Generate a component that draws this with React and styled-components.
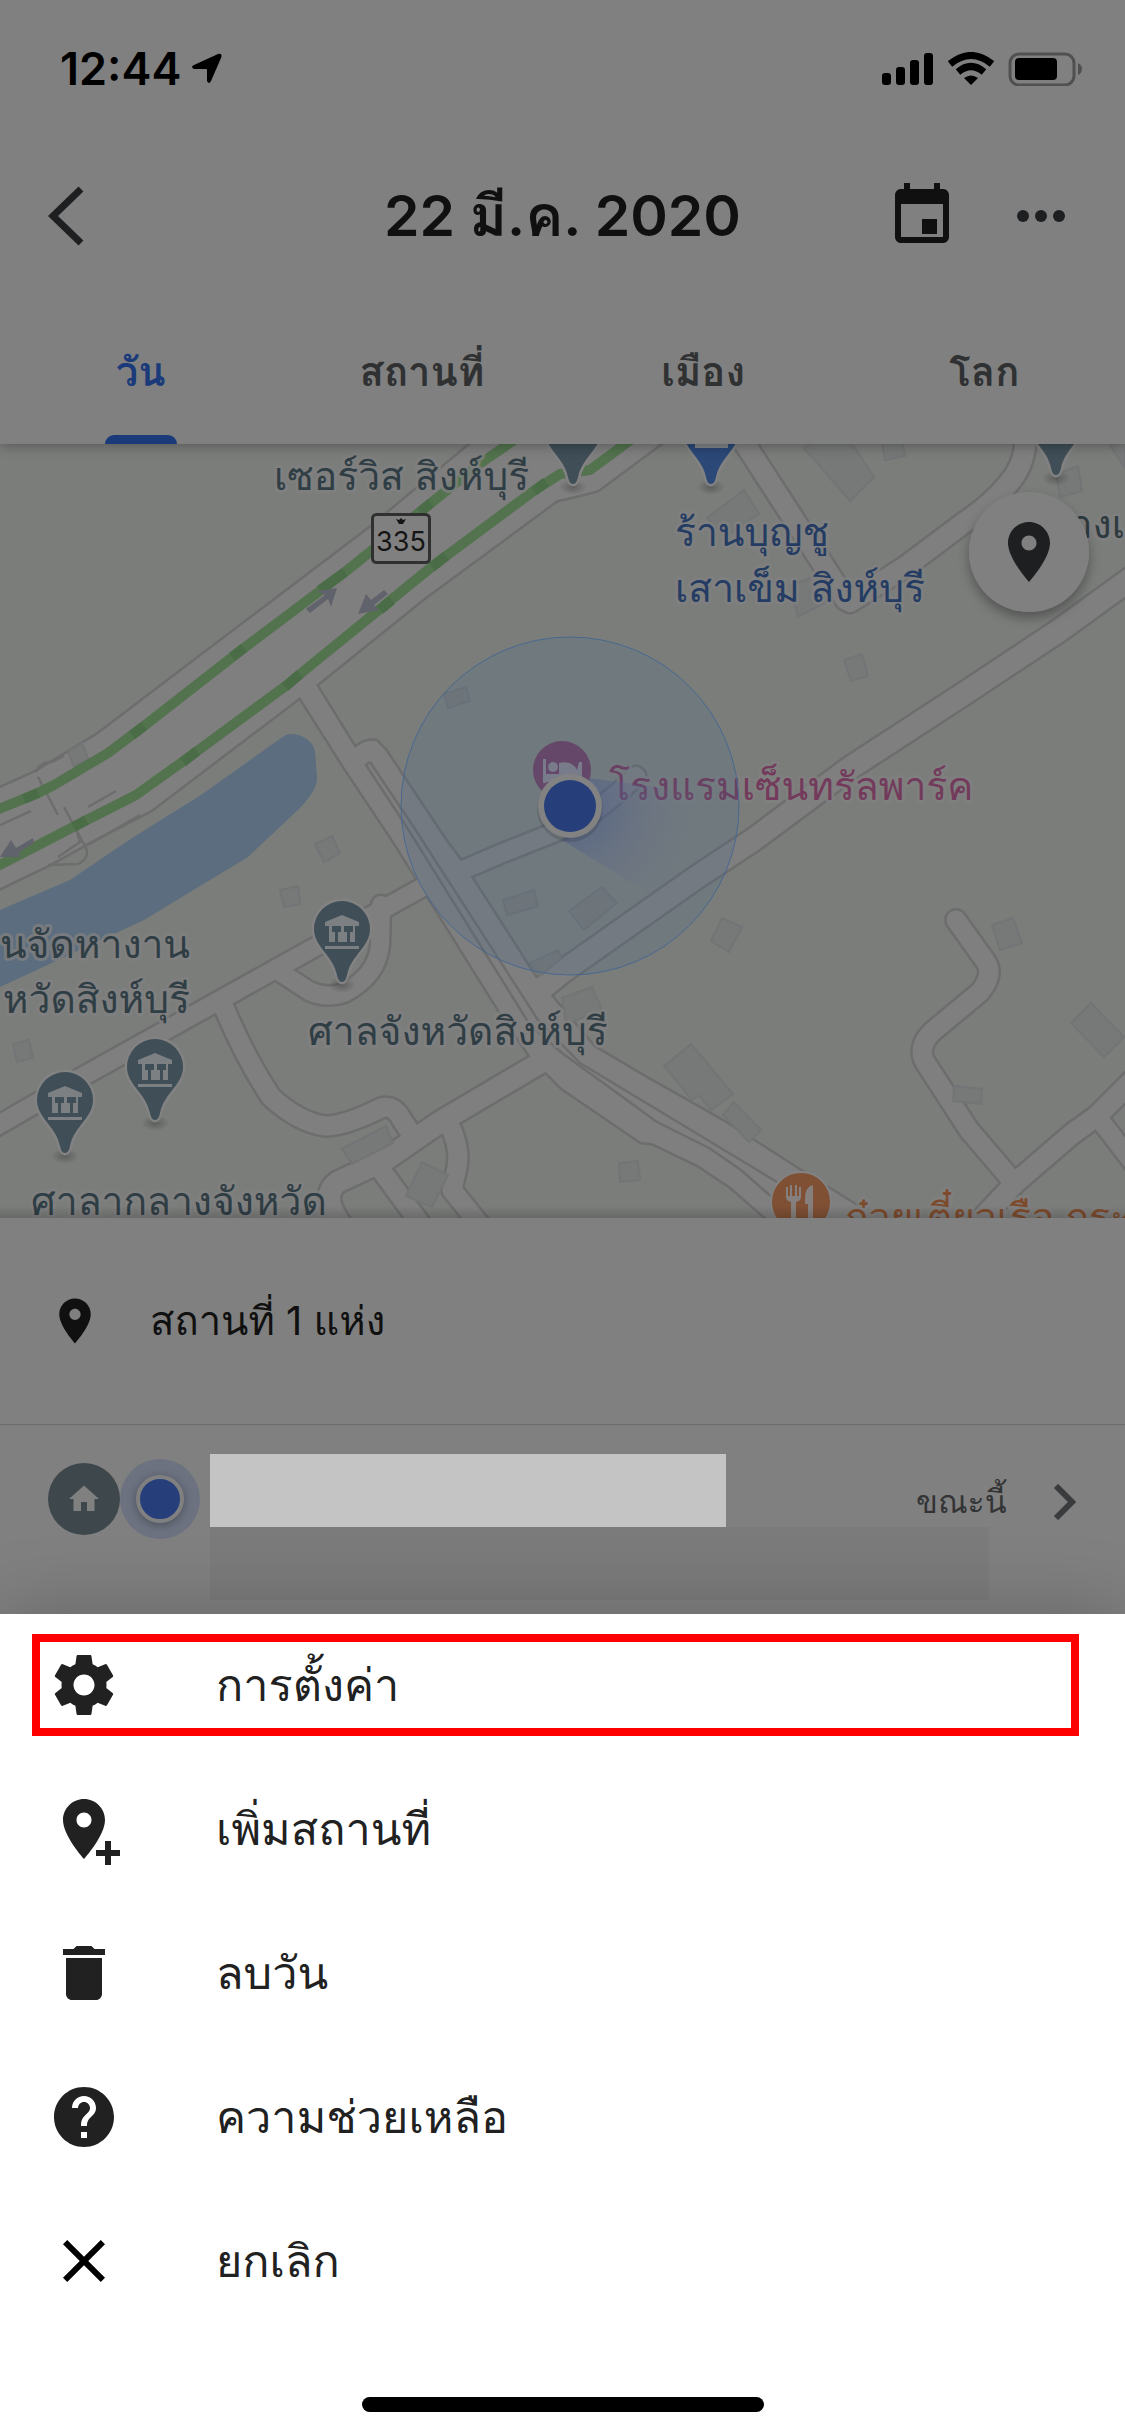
import React from "react";
import styled, { createGlobalStyle, css } from "styled-components";

const thai = `Inter, Loma, "Noto Sans Thai Looped", "Noto Sans Thai", "Noto Sans", sans-serif`;

const GlobalStyle = createGlobalStyle`
  *, *::before, *::after { box-sizing: border-box; }
  body { margin: 0; background: #ffffff; font-family: ${thai}; }
  svg { display: block; }
`;

const BareButton = styled.button`
  margin: 0;
  padding: 0;
  border: 0;
  background: none;
  color: inherit;
  font-family: inherit;
  cursor: pointer;
`;

const Screen = styled.div`
  display: flex;
  flex-direction: column;
  width: 100%;
  min-height: 100vh;
  background: #808080;
  overflow: hidden;
`;

const Header = styled.header`
  display: flex;
  flex-direction: column;
  position: relative;
  z-index: 1;
  background: #808080;
  box-shadow: 0 2px 12px rgba(0, 0, 0, 0.3);
`;

const StatusBar = styled.div`
  display: flex;
  align-items: center;
  justify-content: space-between;
  height: 138px;
  padding: 0 42px 0 60px;
  color: #000000;
`;

const StatusGroup = styled.div`
  display: flex;
  align-items: center;
  gap: ${(p) => p.$gap}px;
`;

const Clock = styled.time`
  font-size: 45px;
  line-height: 54px;
  font-weight: 600;
`;

const NavBar = styled.div`
  display: grid;
  grid-template-columns: 1fr auto 1fr;
  align-items: center;
  height: 156px;
  padding: 0 48px;
  color: #1e1f20;
`;

const Title = styled.h1`
  margin: 0;
  font-size: 57px;
  line-height: 84px;
  font-weight: 600;
  color: #101010;
`;

const NavActions = styled.div`
  display: flex;
  align-items: center;
  justify-content: flex-end;
  gap: 62px;
`;

const IconButton = styled(BareButton)`
  display: flex;
  align-items: center;
`;

const Tabs = styled.nav`
  display: grid;
  grid-template-columns: repeat(4, 1fr);
  height: 150px;
`;

const Tab = styled(BareButton)`
  display: flex;
  flex-direction: column;
  align-items: center;
  justify-content: space-between;
  padding-top: 48px;
  font-size: 40px;
  line-height: 60px;
  font-weight: 600;
  color: ${(p) => (p.$active ? "#1a3a7a" : "#2f3133")};

  &::after {
    content: "";
    width: 72px;
    height: 9px;
    border-radius: 9px 9px 0 0;
    background: ${(p) => (p.$active ? "#1b3a7a" : "transparent")};
  }
`;

const MapArea = styled.section`
  position: relative;
  height: 774px;
  background: #7b7d7b;
  overflow: hidden;

  & > svg {
    width: 100%;
    height: 100%;
  }

  &::after {
    content: "";
    position: absolute;
    inset: auto 0 0;
    height: 12px;
    background: linear-gradient(transparent, rgba(0, 0, 0, 0.16));
  }
`;

const LocateButton = styled(BareButton)`
  position: absolute;
  top: 48px;
  right: 36px;
  display: flex;
  align-items: center;
  justify-content: center;
  width: 120px;
  height: 120px;
  border-radius: 50%;
  background: rgba(128, 128, 128, 0.97);
  color: #1e1f20;
  box-shadow: 0 6px 12px rgba(0, 0, 0, 0.32);
`;

const Summary = styled.section`
  display: flex;
  align-items: center;
  gap: 48px;
  height: 207px;
  padding: 0 48px;
  border-bottom: 1px solid #6c6c6c;
  font-size: 40px;
  line-height: 60px;
  color: #101010;
`;

const VisitRow = styled.section`
  display: grid;
  grid-template-columns: 162px 1fr 73px 88px;
  grid-template-rows: 73px 73px;
  height: 189px;
  padding: 29px 48px 0;
`;

const VisitMarkers = styled.div`
  grid-area: 1 / 1 / 3 / 2;
  display: flex;
  align-items: center;
  height: 90px;
`;

const HomeBadge = styled.div`
  display: flex;
  align-items: center;
  justify-content: center;
  width: 72px;
  height: 72px;
  border-radius: 50%;
  background: #3d474c;
  color: #808080;
`;

const CurrentDot = styled.div`
  display: flex;
  align-items: center;
  justify-content: center;
  width: 80px;
  height: 80px;
  border-radius: 50%;
  background: #6c7280;

  &::after {
    content: "";
    width: 48px;
    height: 48px;
    border-radius: 50%;
    border: 4px solid #808080;
    background: #263f7a;
    box-shadow: 0 2px 10px rgba(0, 0, 0, 0.3);
  }
`;

const NameCover = styled.div`
  grid-area: 1 / 2 / 2 / 3;
  width: 100%;
  max-width: 516px;
  background: #c4c4c4;
`;

const AddressCover = styled.div`
  grid-area: 2 / 2 / 3 / 4;
  background: #7b7b7b;
`;

const VisitLink = styled(BareButton)`
  grid-area: 1 / 3 / 3 / 5;
  display: flex;
  align-items: center;
  justify-content: space-between;
  height: 96px;
  font-size: 32px;
  line-height: 48px;
  color: #333435;
`;

const Sheet = styled.section`
  flex: 1;
  display: flex;
  flex-direction: column;
  justify-content: space-between;
  position: relative;
  background: #ffffff;
  box-shadow: 0 0 72px rgba(0, 0, 0, 0.22);
`;

const Menu = styled.ul`
  display: flex;
  flex-direction: column;
  gap: 42px;
  list-style: none;
  margin: 0;
  padding: 20px 46px 0 32px;
`;

const MenuButton = styled(BareButton)`
  display: flex;
  align-items: center;
  gap: 96px;
  width: 100%;
  height: 102px;
  border: 8px solid ${(p) => (p.$marked ? "#ff0000" : "transparent")};
  padding-left: 8px;
  text-align: left;
  font-size: 45px;
  line-height: 66px;
  color: #212121;
`;

const HomeIndicator = styled.div`
  align-self: center;
  width: 402px;
  height: 15px;
  margin-bottom: 24px;
  border-radius: 8px;
  background: #000000;
`;

const MapLabel = styled.text`
  font-family: ${thai};
  font-size: ${(p) => p.$size || 39}px;
  font-weight: 400;
  fill: ${(p) => p.$color};
  text-anchor: ${(p) => p.$anchor || "start"};
  ${(p) =>
    !p.$plain &&
    css`
      paint-order: stroke;
      stroke: rgba(128, 128, 128, 0.8);
      stroke-width: 6px;
      stroke-linejoin: round;
    `}
`;

const PIN = "M12 2C8.13 2 5 5.13 5 9c0 5.25 7 13 7 13s7-7.75 7-13c0-3.87-3.13-7-7-7zm0 9.5c-1.38 0-2.5-1.12-2.5-2.5s1.12-2.5 2.5-2.5 2.5 1.12 2.5 2.5-1.12 2.5-2.5 2.5z";

const Glyph = ({ size = 72, d, children, color = "currentColor" }) => (
  <svg width={size} height={size} viewBox="0 0 24 24" fill={color} aria-hidden="true">
    {d ? <path d={d} /> : children}
  </svg>
);

const roads = [
  { d: "M-10 1130 L80 1078 L423 887 L505 852 L563 829 Q600 812 636 776", w: 18 },
  { d: "M540 990 L562 972 L697 877 L753 840 L850 768 L962 695 L1060 630 L1140 572", w: 22 },
  { d: "M736 430 L846 600", w: 20 },
  { d: "M1025 430 Q1028 462 1008 484 Q992 504 965 522 L905 567 L850 602", w: 20 },
  { d: "M956 920 L986 962 Q994 975 980 992 L932 1032 Q917 1047 925 1062 L969 1130 L1015 1184", w: 19 },
  { d: "M975 1226 L1015 1183 L1072 1134 L1097 1116 L1135 1078", w: 20 },
  { d: "M1100 1120 L1140 1172", w: 18 },
  { d: "M280 972 L309 991 Q326 999 344 993 Q377 976 380 945 L381 905", w: 18 },
  { d: "M223 1005 Q244 1056 271 1097 Q298 1122 325 1126 Q345 1126 381 1108 Q394 1104 402 1120 L414 1138", w: 19 },
  { d: "M345 1230 Q318 1196 338 1182 L385 1160 L440 1122 L545 1060", w: 21 },
  { d: "M381 1170 L425 1230", w: 19 },
  { d: "M449 1124 Q462 1150 456 1172 L452 1190 L484 1230", w: 19 },
];

const carriageways = [
  "M-6 791 L36 772 L97 735 L172 678 L370 528 L478 438 L668 438 L598 490 Q580 495 557 500 L424 598 L316 685 L355 748 Q365 739 376 741 L385 750 L445 840 L460 860 L535 977 L594 1047 L641 1075 L724 1122 L799 1170 L860 1208 L870 1230 L780 1230 L731 1187 L698 1165 L652 1143 L641 1142 L562 1088 L531 1057 L499 1010 L393 840 L345 768 L300 697 L151 810 L93 840 L48 865 L-6 891 Z",
];

const buildings = [
  "444,694 466,687 470,701 448,708",
  "68,752 82,743 88,758 74,767",
  "315,844 332,836 340,853 324,862",
  "280,890 298,886 300,904 284,907",
  "13,1044 29,1040 33,1058 17,1062",
  "503,900 534,890 538,906 507,915",
  "569,911 602,887 617,903 584,930",
  "530,963 558,950 562,958 540,976",
  "562,998 592,987 602,1010 566,1024",
  "707,518 744,490 759,514 725,536",
  "804,448 840,425 874,477 850,501",
  "882,443 902,440 905,456 885,460",
  "790,586 820,574 826,602 798,617",
  "844,660 862,654 868,676 851,681",
  "1056,474 1078,466 1082,491 1060,497",
  "711,941 722,918 742,927 729,952",
  "992,925 1013,918 1022,943 1000,950",
  "1071,1023 1091,1003 1124,1037 1104,1057",
  "954,1086 982,1089 981,1104 953,1101",
  "664,1066 691,1044 733,1094 711,1110 699,1095 692,1100",
  "723,1115 734,1102 761,1130 749,1142",
  "619,1163 638,1161 640,1180 620,1182",
  "342,1149 386,1126 393,1143 352,1164",
  "422,1162 448,1175 432,1207 406,1196",
  "1109,444 1125,444 1125,468",
];

const pinShape = "M0 0 C-3 0 -4 -3 -5 -7 C-9 -27 -28 -35 -28 -53 A28 28 0 1 1 28 -53 C28 -35 9 -27 5 -7 C4 -3 3 0 0 0 Z";

const MapPin = ({ x, y, color = "#3f4e57", civic }) => (
  <g transform={`translate(${x} ${y})`}>
    <ellipse cx="0" cy="3" rx="14" ry="8" fill="url(#tip)" />
    <path d={pinShape} fill={color} stroke="#828282" strokeWidth="5" paintOrder="stroke" />
    {civic && (
      <path
        fill="#7c8083"
        fillRule="evenodd"
        d="M0 -67 L17 -60 V-56 H13 V-40 H-13 V-56 H-17 V-60 Z M-10 -56 V-50 H-7 V-40 H-4 V-50 H-1 V-56 Z M2 -56 V-50 H5 V-40 H8 V-50 H11 V-56 Z M-17 -36 H17 V-33 H-17 Z"
      />
    )}
  </g>
);

const StreetMap = () => (
  <svg viewBox="0 444 1125 774" preserveAspectRatio="xMidYMid slice" role="img" aria-label="แผนที่">
    <defs>
      <radialGradient id="beam" gradientUnits="userSpaceOnUse" cx="570" cy="806" r="130">
        <stop offset="0.2" stopColor="#44588a" stopOpacity="0.45" />
        <stop offset="1" stopColor="#70708a" stopOpacity="0" />
      </radialGradient>
      <radialGradient id="tip">
        <stop offset="0" stopColor="#000" stopOpacity="0.25" />
        <stop offset="1" stopColor="#000" stopOpacity="0" />
      </radialGradient>
    </defs>
    <rect x="-600" y="400" width="2400" height="900" fill="#7b7d7b" />
    <path
      fill="#5b6d7e"
      d="M284 736 Q293 731 305 738 Q313 742 315 752 L317 778 Q317 790 300 808 L266 840 L248 857 L144 920 L0 987 L-10 990 L-10 914 L0 910 L70 880 L129 840 L201 795 Z"
    />
    <g fill="none" stroke="#6d6d6e" strokeLinecap="round" strokeLinejoin="round">
      {roads.map((r) => (
        <path key={r.d} d={r.d} strokeWidth={r.w + 5} />
      ))}
      {carriageways.map((d) => (
        <path key={d} d={d} strokeWidth="5" />
      ))}
    </g>
    <g fill="none" stroke="#807f80" strokeLinecap="round" strokeLinejoin="round">
      {roads.map((r) => (
        <path key={r.d} d={r.d} strokeWidth={r.w} />
      ))}
      {carriageways.map((d) => (
        <path key={d} d={d} fill="#807f80" stroke="none" />
      ))}
    </g>
    <g fill="none" stroke="#6d6d6e" strokeWidth="2.500" strokeLinejoin="round">
      <path d="M370 762 L413 826 L538 1020 L580 1063 L777 1182" />
      <path d="M370 762 L366 765 L406 826 L530 1025 L562 1053 L657 1122 L709 1148 L741 1170 L775 1200 L790 1220" />
      <path d="M36 772 Q40 762 52 762 L64 756" />
      <path d="M38 777 L58 815 M64 807 L72 822 L86 848 Q90 858 78 864 L48 865" />
      <path d="M74 822 L80 842 L58 857 M88 845 L140 815" />
      <path d="M0 825 L31 811 M88 807 L116 791" />
    </g>
    <g fill="#777978" stroke="#727475" strokeWidth="2">
      {buildings.map((p) => (
        <polygon key={p} points={p} />
      ))}
    </g>
    <g fill="none" stroke="#52734d" strokeWidth="10" strokeLinejoin="round">
      <path d="M-6 811 L38 793 L54 785 L108 753 L144 726 L244 648 L345 572 L431 503 L478 465 L520 436" />
      <path d="M-6 868 L77 825 L136 795 L185 760 L287 685 L305 670 L413 582 L434 565 L535 490 L560 474 L590 470 L636 436" />
      <path
        stroke="#4a6d47"
        d="M24 799 L38 793 M132 735 L144 726 M232 657 L244 648 M320 590 L345 572 M420 512 L431 503 M74 827 L86 820 M183 762 L197 751 M285 687 L300 674 M380 610 L392 600 M432 567 L446 556 M534 491 L546 482"
      />
    </g>
    <g fill="#60626c">
      <path d="M306 609 L325 595 L317 591 L337 588 L331 607 L328 599 L310 613 Z" />
      <path d="M384 590 L371 600 L366 594 L358 614 L379 610 L374 605 L388 594 Z" />
      <path d="M33 838 L16 848 L11 840 L0 857 L20 857 L19 852 L34 843 Z" />
    </g>
    <MapLabel x="274" y="490" $color="#2f3d45">เซอร์วิส สิงห์บุรี</MapLabel>
    <rect x="372.500" y="514.500" width="57" height="48" rx="4" fill="#808080" stroke="#303030" strokeWidth="3" />
    <path d="M396 519 L399 520 L401 518 L403 520 L406 519 L403 524 H399 Z" fill="#151515" />
    <MapLabel x="401" y="551" $size="27" $anchor="middle" $plain $color="#151515">335</MapLabel>
    <MapLabel x="675" y="546" $color="#243c63">ร้านบุญชู</MapLabel>
    <MapLabel x="675" y="602" $color="#243c63">เสาเข็ม สิงห์บุรี</MapLabel>
    <MapLabel x="1125" y="538" $anchor="end" $color="#2e3a3e">างเ</MapLabel>
    <MapLabel x="190" y="958" $anchor="end" $color="#2f3d45">นจัดหางาน</MapLabel>
    <MapLabel x="190" y="1013" $anchor="end" $color="#2f3d45">หวัดสิงห์บุรี</MapLabel>
    <MapLabel x="308" y="1045" $color="#2f3d45">ศาลจังหวัดสิงห์บุรี</MapLabel>
    <MapLabel x="31" y="1215" $color="#2f3d45">ศาลากลางจังหวัด</MapLabel>
    <MapLabel x="845" y="1231" $color="#7d4b2c">ก๋วยเตี๋ยวเรือ กระ</MapLabel>
    <MapLabel x="609" y="800" $color="#733a5b">โรงแรมเซ็นทรัลพาร์ค</MapLabel>
    <MapPin x={573} y={484} />
    <MapPin x={711} y={484} color="#2b4877" />
    <path d="M695 444 H728 V448 H695 Z" fill="#808488" />
    <MapPin x={1056} y={475} />
    <MapPin x={342} y={982} civic />
    <MapPin x={155} y={1120} civic />
    <MapPin x={65} y={1153} civic />
    <circle cx="801" cy="1202" r="30" fill="#7f5034" stroke="#828282" strokeWidth="2" />
    <path
      fill="#85807d"
      d="M786 1187 V1197 Q786 1201 791 1202 V1220 H796 V1202 Q801 1201 801 1197 V1187 H799 V1196 H797 V1185 H795 V1196 H792 V1185 H790 V1196 H788 V1187 Z M813 1185 Q805 1187 805 1198 V1204 H808 V1220 H813 Z"
    />
    <circle cx="562" cy="770" r="29" fill="#6e4362" />
    <path fill="#84808a" d="M543 759 H546 V774 H559 V763 Q572 760 577 770 L579 762 H582 V782 H546 V783 H543 Z" />
    <circle cx="553" cy="767" r="5" fill="#84808a" />
    <circle cx="570" cy="806" r="169" fill="#3c648c" fillOpacity="0.17" stroke="#486890" strokeWidth="1" />
    <path d="M590 778 L700 793 L664 903 L562 840 Z" fill="url(#beam)" />
    <circle cx="570" cy="809" r="33" fill="#000" opacity="0.12" />
    <circle cx="570" cy="806" r="32" fill="#828282" />
    <circle cx="570" cy="806" r="26" fill="#263f7a" />
  </svg>
);

const tabs = ["วัน", "สถานที่", "เมือง", "โลก"];

const actions = [
  {
    label: "การตั้งค่า",
    marked: true,
    icon: (
      <Glyph d="M19.43 12.98c.04-.32.07-.64.07-.98s-.03-.66-.07-.98l2.110-1.650c.19-.15.24-.42.12-.64l-2-3.460c-.12-.22-.39-.3-.61-.22l-2.490 1c-.52-.4-1.080-.73-1.690-.98l-.38-2.650C14.460 2.180 14.250 2 14 2h-4c-.25 0-.46.18-.49.42l-.38 2.650c-.61.25-1.170.59-1.690.98l-2.490-1c-.23-.09-.49 0-.61.22l-2 3.460c-.13.22-.07.49.12.64l2.110 1.650c-.04.32-.07.65-.07.98s.03.66.07.98l-2.110 1.650c-.19.15-.24.42-.12.64l2 3.460c.12.22.39.3.61.22l2.490-1c.52.4 1.080.73 1.690.98l.38 2.650c.03.24.24.42.49.42h4c.25 0 .46-.18.49-.42l.38-2.650c.61-.25 1.170-.59 1.690-.98l2.490 1c.23.09.49 0 .61-.22l2-3.460c.12-.22.07-.49-.12-.64l-2.110-1.650zM12 15.500c-1.930 0-3.500-1.570-3.500-3.500s1.570-3.500 3.500-3.500 3.500 1.570 3.500 3.500-1.570 3.500-3.500 3.500z" />
    ),
  },
  {
    label: "เพิ่มสถานที่",
    icon: (
      <Glyph>
        <path d={PIN} />
        <path d="M19 16h2v3h3v2h-3v3h-2v-3h-3v-2h3z" />
      </Glyph>
    ),
  },
  { label: "ลบวัน", icon: <Glyph d="M6 19c0 1.100.9 2 2 2h8c1.100 0 2-.9 2-2V7H6v12zM19 4h-3.500l-1-1h-5l-1 1H5v2h14V4z" /> },
  {
    label: "ความช่วยเหลือ",
    icon: (
      <Glyph d="M12 2C6.480 2 2 6.480 2 12s4.480 10 10 10 10-4.480 10-10S17.520 2 12 2zm1 17h-2v-2h2v2zm2.070-7.750l-.9.92C13.450 12.900 13 13.500 13 15h-2v-.5c0-1.100.45-2.100 1.170-2.830l1.240-1.260c.37-.36.59-.86.59-1.410 0-1.100-.9-2-2-2s-2 .9-2 2H8c0-2.210 1.790-4 4-4s4 1.790 4 4c0 .88-.36 1.680-.93 2.250z" />
    ),
  },
  {
    label: "ยกเลิก",
    icon: (
      <Glyph color="#000000" d="M19 6.410L17.590 5 12 10.590 6.410 5 5 6.410 10.590 12 5 17.590 6.410 19 12 13.410 17.590 19 19 17.590 13.410 12z" />
    ),
  },
];

export default function App() {
  return (
    <Screen>
      <GlobalStyle />
      <Header>
        <StatusBar>
          <StatusGroup $gap={10}>
            <Clock>12:44</Clock>
            <svg width="32" height="32" viewBox="0 0 32 32" aria-hidden="true">
              <path d="M27 1 Q32 0 30 5 L20 28 Q18 32 16 28 V17 Q16 16 15 16 H3 Q-1 14 3 12 Z" fill="#000" />
            </svg>
          </StatusGroup>
          <StatusGroup $gap={14}>
            <svg width="52" height="32" viewBox="0 0 52 32" aria-hidden="true">
              <rect x="0" y="20" width="9" height="12" rx="3" />
              <rect x="14" y="14" width="9" height="18" rx="3" />
              <rect x="28" y="7" width="9" height="25" rx="3" />
              <rect x="42" y="0" width="9" height="32" rx="3" />
            </svg>
            <svg width="46" height="34" viewBox="0 0 46 34" aria-hidden="true">
              <path d="M23 33 L16 26 Q23 21 30 26 Z" />
              <path d="M10 20 Q23 9 36 20" fill="none" stroke="#000" strokeWidth="7" />
              <path d="M2 12 Q23 -5 44 12" fill="none" stroke="#000" strokeWidth="7" />
            </svg>
            <svg width="75" height="34" viewBox="0 0 75 34" aria-hidden="true">
              <rect x="2" y="2" width="64" height="31" rx="9" fill="none" stroke="#505050" strokeWidth="3" />
              <rect x="7" y="6" width="42" height="22" rx="4" />
              <path d="M70 11 Q74 13 74 17 Q74 21 70 23 Z" fill="#505050" />
            </svg>
          </StatusGroup>
        </StatusBar>
        <NavBar>
          <IconButton aria-label="กลับ">
            <svg width="36" height="60" viewBox="0 0 36 60" fill="none" stroke="#1e1f20" strokeWidth="7" aria-hidden="true">
              <path d="M33 3 L5 30 L33 57" />
            </svg>
          </IconButton>
          <Title>22 มี.ค. 2020</Title>
          <NavActions>
            <IconButton aria-label="ปฏิทิน">
              <svg width="66" height="72" viewBox="0 0 22 24" fill="#101010" aria-hidden="true">
                <path d="M16 13h-5v5h5v-5zM15 1v2H7V1H5v2H4c-1.110 0-1.990.9-1.990 2L2 19c0 1.100.89 2 2 2h14c1.100 0 2-.9 2-2V5c0-1.100-.9-2-2-2h-1V1h-2zm3 18H4V8h14v11z" />
              </svg>
            </IconButton>
            <IconButton aria-label="เพิ่มเติม">
              <svg width="60" height="24" viewBox="0 0 60 24" fill="#1e1f20" aria-hidden="true">
                <circle cx="6" cy="12" r="6" />
                <circle cx="24" cy="12" r="6" />
                <circle cx="42" cy="12" r="6" />
              </svg>
            </IconButton>
          </NavActions>
        </NavBar>
        <Tabs>
          {tabs.map((t, i) => (
            <Tab key={t} $active={i === 0} aria-current={i === 0 ? "page" : undefined}>
              <span>{t}</span>
            </Tab>
          ))}
        </Tabs>
      </Header>
      <MapArea>
        <StreetMap />
        <LocateButton aria-label="ตำแหน่ง">
          <Glyph d={PIN} />
        </LocateButton>
      </MapArea>
      <Summary>
        <Glyph size={54} d={PIN} />
        <span>สถานที่ 1 แห่ง</span>
      </Summary>
      <VisitRow>
        <VisitMarkers>
          <HomeBadge>
            <Glyph size={36} d="M10 20v-6h4v6h5v-8h3L12 3 2 12h3v8z" />
          </HomeBadge>
          <CurrentDot />
        </VisitMarkers>
        <NameCover />
        <AddressCover />
        <VisitLink>
          <span>ขณะนี้</span>
          <svg width="24" height="36" viewBox="0 0 24 36" fill="none" stroke="#3a3b3c" strokeWidth="6" aria-hidden="true">
            <path d="M3 2 L19 18 L3 34" />
          </svg>
        </VisitLink>
      </VisitRow>
      <Sheet>
        <Menu>
          {actions.map((a) => (
            <li key={a.label}>
              <MenuButton $marked={a.marked}>
                {a.icon}
                <span>{a.label}</span>
              </MenuButton>
            </li>
          ))}
        </Menu>
        <HomeIndicator />
      </Sheet>
    </Screen>
  );
}
